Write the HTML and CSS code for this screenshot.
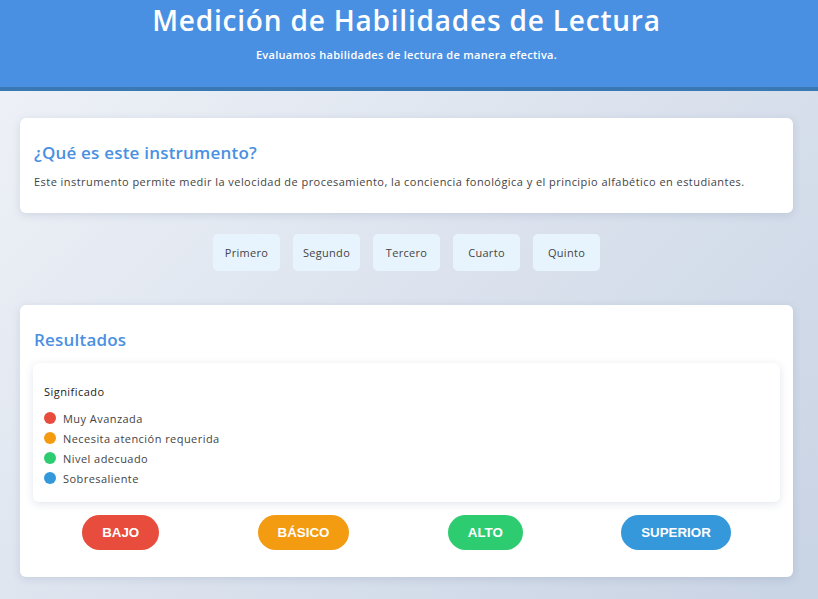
FILE: index.html
```html
<!DOCTYPE html>
<html lang="es">
<head>
<meta charset="utf-8">
<title>Medición de Habilidades de Lectura</title>
<link rel="stylesheet" href="styles.css">
</head>
<body>
<header class="site-header">
  <h1 class="site-title">Medición de Habilidades de Lectura</h1>
  <p class="site-subtitle">Evaluamos habilidades de lectura de manera efectiva.</p>
</header>
<main class="container">
  <section class="card intro">
    <h2 class="card-title">¿Qué es este instrumento?</h2>
    <p class="card-text">Este instrumento permite medir la velocidad de procesamiento, la conciencia fonológica y el principio alfabético en estudiantes.</p>
  </section>

  <nav class="grades">
    <button class="grade">Primero</button>
    <button class="grade">Segundo</button>
    <button class="grade">Tercero</button>
    <button class="grade">Cuarto</button>
    <button class="grade">Quinto</button>
  </nav>

  <section class="card results">
    <h2 class="card-title">Resultados</h2>
    <div class="legend">
      <h4 class="legend-title">Significado</h4>
      <ul class="legend-list">
        <li class="legend-item"><span class="dot dot-red"></span>Muy Avanzada</li>
        <li class="legend-item"><span class="dot dot-orange"></span>Necesita atención requerida</li>
        <li class="legend-item"><span class="dot dot-green"></span>Nivel adecuado</li>
        <li class="legend-item"><span class="dot dot-blue"></span>Sobresaliente</li>
      </ul>
    </div>
    <div class="levels">
      <button class="level level-red">BAJO</button>
      <button class="level level-orange">BÁSICO</button>
      <button class="level level-green">ALTO</button>
      <button class="level level-blue">SUPERIOR</button>
    </div>
  </section>
</main>
</body>
</html>
```

FILE: styles.css
```css
* { box-sizing: border-box; }

html, body {
  margin: 0;
  padding: 0;
}

body {
  font-family: "Open Sans", "DejaVu Sans", sans-serif;
  letter-spacing: 0.45px;
  color: #333;
  min-height: 599px;
  background: linear-gradient(135deg, #f0f3f8 0%, #c8d3e4 100%);
  background-attachment: fixed;
}

.site-header {
  background: #4a90e2;
  border-bottom: 4px solid #3a78b4;
  color: #fff;
  text-align: center;
  height: 91px;
  padding: 0 5px 0 0;
}

.site-title {
  margin: 0;
  font-size: 28px;
  font-weight: 600;
  letter-spacing: 0.8px;
  line-height: 40px;
}

.site-subtitle {
  margin: 7px 0 0;
  font-size: 11px;
  font-weight: 600;
  letter-spacing: 0.3px;
  line-height: 16px;
}

.container {
  padding: 27px 25px 0 20px;
}

.card {
  background: #fff;
  border-radius: 6px;
  box-shadow: 0 2px 8px rgba(60, 80, 120, 0.15);
}

.intro {
  padding: 23px 14px 23px 14px;
}

.card-title {
  margin: 0;
  color: #4a90e2;
  font-size: 17px;
  font-weight: 600;
  letter-spacing: 0.2px;
  line-height: 24px;
}

.card-text {
  margin: 9px 0 0;
  font-size: 11px;
  line-height: 16px;
  color: #444;
}

.grades {
  display: flex;
  justify-content: center;
  gap: 13px;
  margin: 21px 0 34px;
}

.grade {
  width: 67px;
  height: 37px;
  border: none;
  border-radius: 5px;
  background: #e8f4fd;
  color: #444;
  font-family: "Open Sans", "DejaVu Sans", sans-serif;
  font-size: 11px;
  letter-spacing: 0.3px;
  padding: 0;
}

.results {
  padding: 23px 13px 27px 13px;
}

.results .card-title {
  padding-left: 1px;
}

.legend {
  margin-top: 11px;
  background: #fff;
  border-radius: 6px;
  box-shadow: 0 2px 8px rgba(60, 80, 120, 0.15);
  padding: 21px 11px 14px;
}

.legend-title {
  margin: 0 0 8px;
  font-size: 11px;
  font-weight: 500;
  line-height: 16px;
  color: #222;
}

.legend-list {
  list-style: none;
  margin: 0;
  padding: 0;
}

.legend-item {
  display: flex;
  align-items: center;
  gap: 7px;
  height: 20px;
  font-size: 11px;
  color: #444;
}

.dot {
  width: 12px;
  height: 12px;
  border-radius: 50%;
  flex: none;
}

.dot-red { background: #e74c3c; }
.dot-orange { background: #f39c12; }
.dot-green { background: #2ecc71; }
.dot-blue { background: #3498db; }

.levels {
  display: flex;
  justify-content: space-around;
  margin-top: 13px;
}

.level {
  height: 35px;
  padding: 0 20px;
  border: none;
  border-radius: 18px;
  color: #fff;
  font-family: "Liberation Sans", Arial, sans-serif;
  font-size: 13.33px;
  font-weight: bold;
  letter-spacing: 0;
}

.level-red { background: #e74c3c; }
.level-orange { background: #f39c12; }
.level-green { background: #2ecc71; }
.level-blue { background: #3498db; }
```
